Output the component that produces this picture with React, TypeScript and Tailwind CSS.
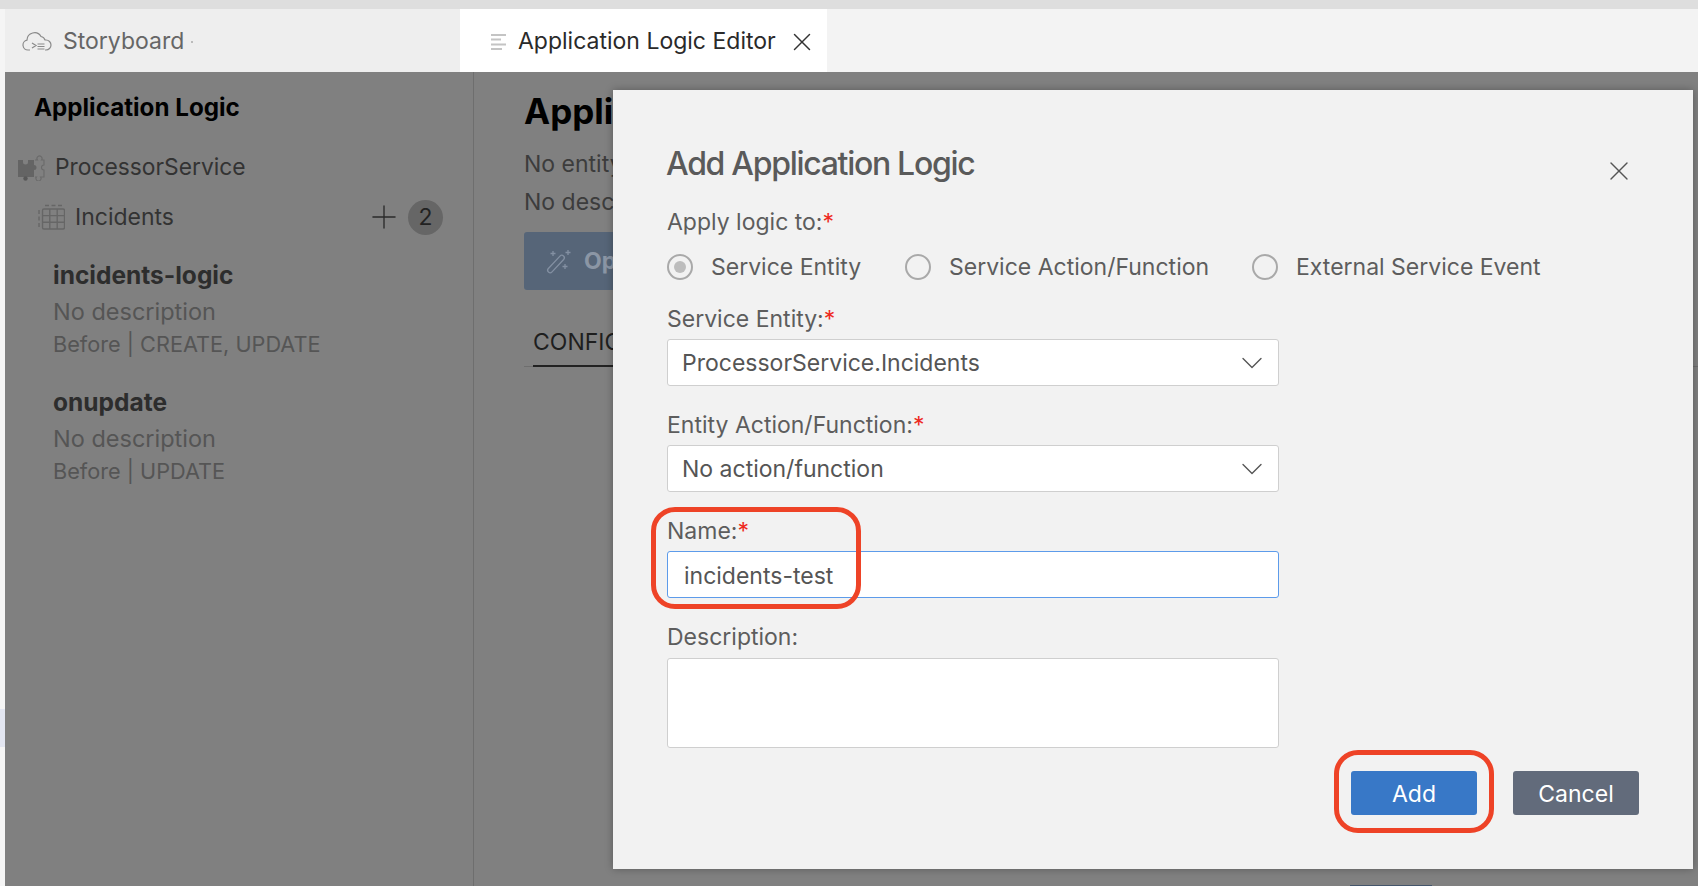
import { X, Plus, ChevronDown } from "lucide-react";

const font = "font-['Inter','Noto_Sans',sans-serif]";

function CloudIcon() {
  return (
    <svg width="31" height="22" viewBox="0 0 31 22" fill="none" stroke="#8a8a8a" strokeWidth="1.2">
      <path d="M8 19H6a5 5 0 0 1-1-9.900A7.500 7.500 0 0 1 19 5.500a5 5 0 0 1 4 3.500h1a5 5 0 0 1 0 10h-1" />
      <path d="M10 12l4 2.500-4 2.500M15.500 13h7M15.500 15.500h7M15.500 18h7" />
    </svg>
  );
}

function LinesIcon() {
  return (
    <svg width="16" height="16" viewBox="0 0 16 16" fill="none" stroke="#c4c4c4" strokeWidth="2">
      <path d="M0 1h15M0 5.500h10M0 10.500h15M0 15h11" />
    </svg>
  );
}

function PuzzleIcon() {
  return (
    <svg width="28" height="28" viewBox="0 0 28 28" fill="none">
      <path d="M1 7h5v2a2.500 2.500 0 0 0 5 0V7h6v5a2.500 2.500 0 0 1 0 5v7H1z" fill="#646464" />
      <circle cx="8.500" cy="25.500" r="2.200" fill="#585858" />
      <path d="M18 7h2.500a2.500 2.500 0 1 1 4 0H27v5a2.500 2.500 0 0 0 0 5v7h-3.500a2.500 2.500 0 1 1-4 0H18" stroke="#6a6a6a" strokeWidth="1.100" />
    </svg>
  );
}

function TableIcon() {
  return (
    <svg width="27" height="26" viewBox="0 0 27 26" fill="none" stroke="#666666" strokeWidth="1.400">
      <path d="M7 1.500h17" strokeDasharray="4 2.500" />
      <path d="M1 6v17" strokeDasharray="4 2.500" />
      <rect x="4.500" y="5" width="22" height="20" rx="1.500" />
      <path d="M11.800 5v20M19.200 5v20M4.500 11.600h22M4.500 18.300h22" />
    </svg>
  );
}

function WandIcon() {
  return (
    <svg width="27" height="24" viewBox="0 0 27 24" fill="none" stroke="#8390a2" strokeWidth="1.300">
      <rect x="-2.500" y="-11" width="5" height="22" rx="2.500" transform="translate(11 14) rotate(43)" />
      <path d="M8 1v5M5.500 3.500h5M23 0v5M20.500 2.500h5M20 14v5M17.500 16.500h5" />
    </svg>
  );
}

function Field({ label, required, children }: { label: string; required?: boolean; children: React.ReactNode }) {
  return (
    <div className="mb-[25px] w-[612px]">
      <div className="mb-[6px] h-[28px] text-[23px] leading-[28px] text-[#5d5d5d]">
        {label}
        {required && <span className="text-[#ee2a1f]">*</span>}
      </div>
      {children}
    </div>
  );
}

function SelectBox({ value }: { value: string }) {
  return (
    <div className="flex h-[47px] items-center justify-between rounded-[3px] border border-[#cfcfcf] bg-white pl-[14px] pr-[8px] text-[23px] text-[#555555]">
      <span className="pt-[2px]">{value}</span>
      <ChevronDown size={36} strokeWidth={0.9} className="text-[#555555]" />
    </div>
  );
}

function Radio({ label, checked, className }: { label: string; checked?: boolean; className: string }) {
  return (
    <div className={`flex items-center ${className}`}>
      <span className="flex h-[26px] w-[26px] items-center justify-center rounded-full border-[2px] border-[#a9a9a9] bg-[#f2f2f2]">
        {checked && <span className="h-[12px] w-[12px] rounded-full bg-[#bdbdbd]" />}
      </span>
      <span className="ml-[18px] text-[23px] text-[#5d5d5d]">{label}</span>
    </div>
  );
}

function LogicItem({ name, info, className }: { name: string; info: string; className: string }) {
  return (
    <div className={`pl-[48px] ${className}`}>
      <div className="h-[37px] text-[24.500px] font-bold leading-[35px] text-[#2d2d2d]">{name}</div>
      <div className="h-[33px] text-[23.500px] leading-[33px] text-[#555555]">No description</div>
      <div className="h-[33px] text-[21.700px] leading-[33px] text-[#555555]">{info}</div>
    </div>
  );
}

export default function App() {
  return (
    <div className={`relative flex h-[886px] w-[1698px] flex-col overflow-hidden bg-[#f5f5f5] ${font}`}>
      <div className="h-[9px] shrink-0 bg-[#dedede]" />

      {/* tabs */}
      <div className="ml-[5px] flex h-[63px] shrink-0 bg-[#f3f3f3]">
        <div className="flex w-[455px] items-center bg-[#eeeeee] pl-[17px] pt-[2px] text-[23px] text-[#666666]">
          <CloudIcon />
          <span className="ml-[10px]">Storyboard</span>
          <span className="ml-[7px] h-[2px] w-[2px] rounded-full bg-[#aaaaaa]" />
        </div>
        <div className="flex w-[367px] items-center bg-white pl-[31px] pt-[2px] text-[23px] text-[#2a2a2a]">
          <LinesIcon />
          <span className="ml-[11px]">Application Logic Editor</span>
          <X size={30} strokeWidth={1.200} className="ml-[11px] text-[#333333]" />
        </div>
      </div>

      <div className="ml-[5px] flex flex-1 bg-[#808080]">
        {/* sidebar */}
        <aside className="w-[469px] shrink-0 border-r border-[#6e6e6e]">
          <h2 className="ml-[29px] mt-[21px] h-[30px] text-[24.200px] font-bold leading-[30px] text-black">Application Logic</h2>
          <div className="ml-[12px] mt-[29px] flex h-[30px] items-center text-[22.800px] text-[#333333]">
            <PuzzleIcon />
            <span className="ml-[10px]">ProcessorService</span>
          </div>
          <div className="ml-[33px] mt-[17px] flex h-[36px] w-[405px] items-center text-[23px] text-[#333333]">
            <TableIcon />
            <span className="ml-[10px]">Incidents</span>
            <Plus size={38} strokeWidth={0.850} className="ml-auto text-[#2a2a2a]" />
            <span className="ml-[5px] flex h-[35px] w-[35px] items-center justify-center rounded-full bg-[#666666] text-[23px] text-[#222222]">
              2
            </span>
          </div>
          <LogicItem name="incidents-logic" info="Before | CREATE, UPDATE" className="mt-[23px]" />
          <LogicItem name="onupdate" info="Before | UPDATE" className="mt-[24px]" />
        </aside>

        {/* editor behind the dialog */}
        <main className="flex-1 pl-[50px]">
          <h1 className="mt-[17px] h-[44px] text-[35px] font-bold leading-[44px] text-black">Application Logic</h1>
          <p className="mt-[12px] h-[38px] text-[23px] leading-[38px] text-[#3c3c3c]">No entity</p>
          <p className="h-[38px] text-[23px] leading-[38px] text-[#3c3c3c]">No description</p>
          <div className="mt-[11px] flex h-[58px] w-[200px] items-center rounded-[3px] bg-[#566578] pl-[21px] pt-[1px] text-[23px] font-bold text-[#8b96a5]">
            <WandIcon />
            <span className="ml-[12px]">Open</span>
          </div>
          <div className="mt-[19px] h-[58px] border-b border-[#6e6e6e] pl-[9px]">
            <div className="h-[58px] w-[150px] border-b-[2px] border-[#222222] pt-[16px] text-[23px] leading-[34px] text-[#1e1e1e]">CONFIG</div>
          </div>
        </main>
      </div>

      {/* stray edges of the page behind */}
      <div className="absolute left-0 top-[709px] h-[38px] w-[5px] bg-[#e3e6f1]" />
      <div className="absolute bottom-0 left-[1350px] h-[1px] w-[82px] bg-[#44556b]" />

      {/* dialog */}
      <div className="absolute left-[613px] top-[90px] h-[779px] w-[1080px] bg-[#f2f2f2] pl-[54px] pt-[47px] shadow-[0_0_8px_rgba(0,0,0,0.3)]">
        <h3 className="-ml-[1px] h-[54px] text-[32px] font-medium leading-[54px] tracking-[-1.300px] text-[#5a5a5a]">Add Application Logic</h3>
        <X size={32} strokeWidth={1} className="absolute left-[990px] top-[65px] text-[#555555]" />

        <div className="mt-[17px] h-[28px] text-[23px] leading-[28px] text-[#5d5d5d]">
          Apply logic to:<span className="text-[#ee2a1f]">*</span>
        </div>
        <div className="mb-[23px] mt-[16px] flex h-[30px] items-center">
          <Radio label="Service Entity" checked className="w-[238px]" />
          <Radio label="Service Action/Function" className="w-[347px]" />
          <Radio label="External Service Event" className="w-[300px]" />
        </div>

        <Field label="Service Entity:" required>
          <SelectBox value="ProcessorService.Incidents" />
        </Field>
        <Field label="Entity Action/Function:" required>
          <SelectBox value="No action/function" />
        </Field>
        <Field label="Name:" required>
          <div className="flex h-[47px] items-center rounded-[3px] border border-[#5d9bea] bg-white pl-[16px] pt-[3px] text-[23px] text-[#555555]">incidents-test</div>
        </Field>
        <Field label="Description:">
          <div className="mt-[7px] h-[90px] rounded-[3px] border border-[#cfcfcf] bg-white" />
        </Field>

        <div className="absolute left-[738px] top-[681px] flex gap-[36px] text-[23px] text-white">
          <button className="h-[44px] w-[126px] rounded-[3px] bg-[#3878c7] pt-[2px]">Add</button>
          <button className="h-[44px] w-[126px] rounded-[3px] bg-[#626b7b] pt-[2px]">Cancel</button>
        </div>
      </div>

      {/* annotations */}
      <div className="absolute left-[651px] top-[507px] h-[102px] w-[210px] rounded-[24px] border-[5px] border-[#ee4327]" />
      <div className="absolute left-[1334px] top-[750px] h-[83px] w-[160px] rounded-[24px] border-[5px] border-[#ee4327]" />
    </div>
  );
}
